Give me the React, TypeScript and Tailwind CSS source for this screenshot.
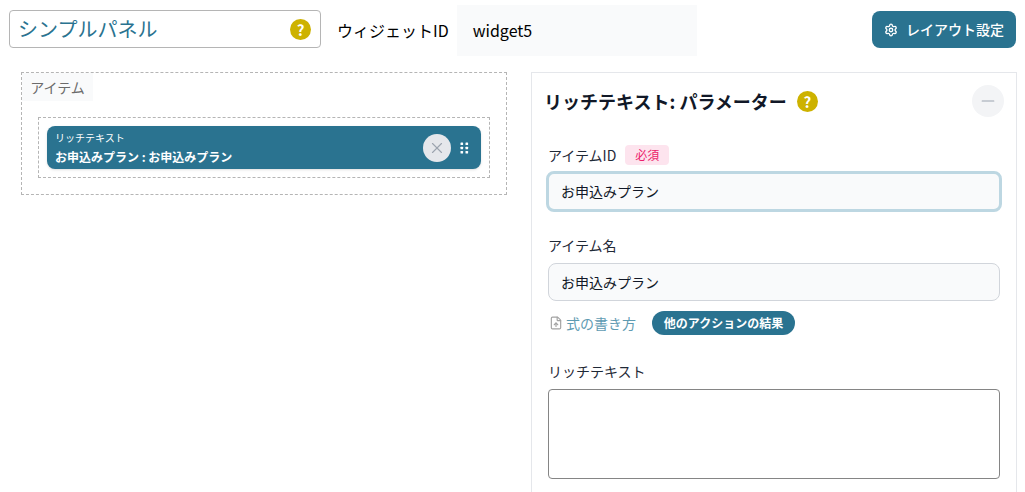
import { Settings, X, Minus, FileUp } from "lucide-react";

const font = { fontFamily: '"Noto Sans CJK JP","Noto Sans",sans-serif' };

function Help() {
  return (
    <span className="flex h-[21px] w-[21px] shrink-0 items-center justify-center rounded-full bg-[#cdb200] text-[15px] font-bold leading-none text-white">?</span>
  );
}

function Grip() {
  return (
    <svg width="9" height="12" viewBox="0 0 9 12" className="shrink-0 text-white" fill="currentColor">
      <rect x="0.5" y="0.5" width="2.6" height="2.6" rx="0.6" />
      <rect x="5.5" y="0.5" width="2.6" height="2.6" rx="0.6" />
      <rect x="0.5" y="4.7" width="2.6" height="2.6" rx="0.6" />
      <rect x="5.5" y="4.7" width="2.6" height="2.6" rx="0.6" />
      <rect x="0.5" y="8.9" width="2.6" height="2.6" rx="0.6" />
      <rect x="5.5" y="8.9" width="2.6" height="2.6" rx="0.6" />
    </svg>
  );
}

export default function App() {
  return (
    <div className="h-[492px] w-[1025px] overflow-hidden bg-white text-[#111827]" style={font}>
      <div className="flex h-[72px] items-start pl-[9px] pr-[9px] pt-[5px]">
        <div className="mt-[5px] flex h-[38px] w-[312px] items-center justify-between rounded-[4px] border border-[#b5b5b5] pl-[8px] pr-[9px]">
          <span className="text-[20px] text-[#2a7390]">シンプルパネル</span>
          <Help />
        </div>
        <span className="ml-[16px] mt-[14px] text-[16px] leading-[22px] text-black">ウィジェットID</span>
        <div className="ml-2 flex h-[51px] w-[240px] items-center bg-[#f9fafb] pb-[2px] pl-4 text-[16px] text-black">widget5</div>
        <button className="ml-auto mt-[6px] flex h-[37px] w-[144px] items-center justify-center gap-2 rounded-lg bg-[#2a7390] text-[14px] font-medium text-white">
          <Settings size={14} strokeWidth={2.25} />
          レイアウト設定
        </button>
      </div>
      <div className="flex items-start pl-[21px]">
        <div className="h-[123px] w-[486px] border border-dashed border-[#b5b5b5]">
          <div className="flex h-[28px] w-[71px] items-center justify-center bg-[#f9fafb] text-[14px] text-[#6b6b6b]">アイテム</div>
          <div className="mx-4 mt-4 h-[61px] border border-dashed border-[#b5b5b5] px-2 pt-2">
            <div className="flex h-[43px] items-center justify-between rounded-lg bg-[#2a7390] pl-2 pr-[12px] text-white shadow-sm">
              <div className="flex flex-col">
                <span className="mt-[1px] text-[10px] leading-[16px]">リッチテキスト</span>
                <span className="mt-[1px] text-[12px] font-bold leading-[20px]">お申込みプラン : お申込みプラン</span>
              </div>
              <div className="flex items-center gap-[9px]">
                <span className="flex h-7 w-7 items-center justify-center rounded-full bg-[#e5e7eb] text-[#9ca3af]"><X size={18} strokeWidth={1.5} /></span>
                <Grip />
              </div>
            </div>
          </div>
        </div>
        <div className="ml-6 h-[440px] w-[486px] border border-[#e5e7eb] px-4 pt-3">
          <div className="flex h-[32px] items-center justify-between">
            <div className="flex items-center gap-[10px]">
              <span className="-ml-[4px] text-[18px] font-bold">リッチテキスト: パラメーター</span>
              <Help />
            </div>
            <span className="-mr-[4px] flex h-8 w-8 items-center justify-center rounded-full bg-[#f3f4f6] text-[#9ca3af]"><Minus size={20} strokeWidth={1.25} /></span>
          </div>
          <div className="mt-[28px] flex h-5 items-center gap-[9px] text-[14px] text-[#1f2937]">
            アイテムID
            <span className="flex h-5 w-11 items-center justify-center rounded bg-[#fde4ee] text-[12px] text-[#ec1c6b]">必須</span>
          </div>
          <div className="mt-[6px] -mx-[2px] flex h-[41px] items-center rounded-lg border-[3px] border-[#bdd7e2] bg-[#f9fafb] pl-3 text-[14px]">お申込みプラン</div>
          <div className="mt-[23px] text-[14px] leading-5 text-[#1f2937]">アイテム名</div>
          <div className="mt-2 flex h-[38px] items-center rounded-lg border border-[#d1d5db] bg-[#f9fafb] pl-[12px] text-[14px]">お申込みプラン</div>
          <div className="mt-[10px] flex items-center pl-[1px]">
            <FileUp size={14} className="mr-[3px] text-[#a3a3a3]" />
            <span className="text-[14px] text-[#5f9bb2]">式の書き方</span>
            <span className="ml-4 flex h-6 w-[143px] items-center justify-center rounded-full bg-[#2a7390] text-[12px] font-bold text-white">他のアクションの結果</span>
          </div>
          <div className="mt-[26px] text-[14px] leading-5 text-[#1f2937]">リッチテキスト</div>
          <div className="mt-2 h-[90px] rounded-[4px] border border-[#858585] bg-white" />
        </div>
      </div>
    </div>
  );
}
